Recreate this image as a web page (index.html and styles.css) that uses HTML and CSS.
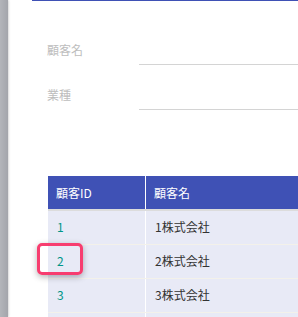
FILE: index.html
```html
<!DOCTYPE html>
<html lang="ja">
<head>
  <meta charset="UTF-8" />
  <title>顧客一覧</title>
  <link rel="stylesheet" href="styles.css">
</head>
<body>
  <div class="sidebar"></div>
  <div class="main">
    <form class="search-form">
      <div class="form-row">
        <label class="form-label">顧客名</label>
        <div class="form-input"></div>
      </div>
      <div class="form-row">
        <label class="form-label">業種</label>
        <div class="form-input"></div>
      </div>
    </form>

    <table class="customer-table">
      <thead>
        <tr>
          <th class="col-id">顧客ID</th>
          <th>顧客名</th>
        </tr>
      </thead>
      <tbody>
        <tr><td class="col-id"><a href="#">1</a></td><td>1株式会社</td></tr>
        <tr><td class="col-id"><a href="#">2</a></td><td>2株式会社</td></tr>
        <tr><td class="col-id"><a href="#">3</a></td><td>3株式会社</td></tr>
        <tr><td class="col-id"></td><td></td></tr>
      </tbody>
    </table>
  </div>

  <!-- highlight around the link -->
  <div class="highlight"></div>
</body>
</html>
```

FILE: styles.css
```css
body {
  margin: 0;
  padding: 0;
  background: white;
  font-family: "Noto Sans CJK JP", "DejaVu Sans", sans-serif;
  font-size: 12px;
  display: flex;
  height: 317px;
  overflow: hidden;
}

.sidebar {
  width: 8px;
  flex-shrink: 0;
  background: linear-gradient(to right, #b3b5ba, #a3a5ab);
  box-shadow: 1px 0 2px rgba(0, 0, 0, 0.15);
}

.main {
  flex: 1;
  margin-left: 24px;
  border-top: 1px solid #3f51b5;
  overflow: hidden;
}

.search-form {
  padding: 35px 0 0 15px;
  margin-bottom: 65px;
}

.form-row {
  display: flex;
  height: 30px;
  margin-bottom: 15px;
}

.form-row:last-child {
  margin-bottom: 0;
}

.form-label {
  width: 92px;
  color: #bdbdbd;
  line-height: 28px;
}

.form-input {
  flex: 1;
  border-bottom: 1px solid #d4d4d4;
  margin-bottom: 1px;
}

.customer-table {
  margin-left: 16px;
  width: 400px;
  border-collapse: collapse;
}

.customer-table th {
  background: #3f51b5;
  color: white;
  font-weight: normal;
  text-align: left;
  height: 32px;
  padding: 0 0 1px 8px;
  border-bottom: 2px solid #dcdcdc;
}

.customer-table td {
  background: #e8eaf6;
  color: #333;
  height: 30px;
  padding: 0 0 3px 9px;
  border-bottom: 1px solid #f3f1ea;
}

.customer-table th + th,
.customer-table td + td {
  border-left: 1px solid white;
}

.customer-table .col-id {
  width: 88px;
}

.customer-table a {
  color: #009688;
  text-decoration: none;
}

.highlight {
  position: absolute;
  left: 37px;
  top: 243px;
  width: 40px;
  height: 26px;
  border: 3px solid #f73d6f;
  border-radius: 5px;
  box-shadow: 0 2px 6px rgba(0, 0, 0, 0.3);
}
```
